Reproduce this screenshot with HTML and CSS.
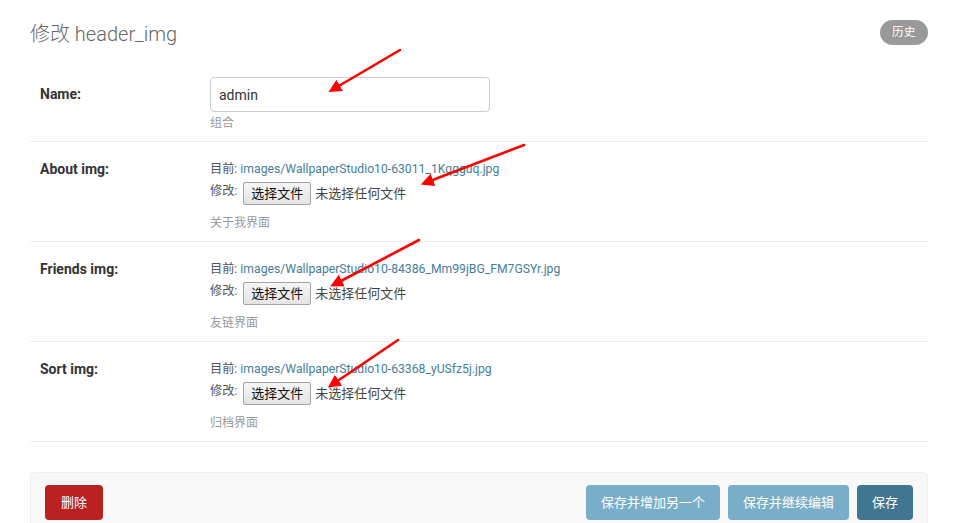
FILE: index.html
```html
<!DOCTYPE html>
<html lang="zh">
<head>
<meta charset="utf-8">
<title>修改 header_img</title>
<link rel="stylesheet" href="styles.css">
</head>
<body>
<div class="content">
  <div class="header">
    <h1 class="title">修改 header_img</h1>
    <a class="history" href="#">历史</a>
  </div>

  <div class="fieldset">
    <div class="form-row">
      <label class="label">Name:</label>
      <div class="field">
        <input class="text-input" type="text" value="admin">
        <div class="help">组合</div>
      </div>
    </div>

    <div class="form-row">
      <label class="label">About img:</label>
      <div class="field file-field">
        <div class="current">目前: <a class="link" href="#">images/WallpaperStudio10-63011_1Kqgguq.jpg</a></div>
        <div class="change">修改: <span class="file-btn">选择文件</span><span class="no-file">未选择任何文件</span></div>
        <div class="help help-file">关于我界面</div>
      </div>
    </div>

    <div class="form-row">
      <label class="label">Friends img:</label>
      <div class="field file-field">
        <div class="current">目前: <a class="link" href="#">images/WallpaperStudio10-84386_Mm99jBG_FM7GSYr.jpg</a></div>
        <div class="change">修改: <span class="file-btn">选择文件</span><span class="no-file">未选择任何文件</span></div>
        <div class="help help-file">友链界面</div>
      </div>
    </div>

    <div class="form-row">
      <label class="label">Sort img:</label>
      <div class="field file-field">
        <div class="current">目前: <a class="link" href="#">images/WallpaperStudio10-63368_yUSfz5j.jpg</a></div>
        <div class="change">修改: <span class="file-btn">选择文件</span><span class="no-file">未选择任何文件</span></div>
        <div class="help help-file">归档界面</div>
      </div>
    </div>
  </div>

  <div class="submit-row">
    <a class="btn btn-delete" href="#">删除</a>
    <div class="btn-group">
      <span class="btn btn-light">保存并增加另一个</span>
      <span class="btn btn-light">保存并继续编辑</span>
      <span class="btn btn-dark">保存</span>
    </div>
  </div>
</div>

<svg class="arrows" width="958" height="523" viewBox="0 0 958 523">
  <defs>
    <marker id="head" markerWidth="5" markerHeight="5" refX="1.2" refY="2.5" orient="auto" markerUnits="strokeWidth">
      <path d="M0,0 L5,2.5 L0,5 Z" fill="#f00"/>
    </marker>
  </defs>
  <g stroke="#f00" stroke-width="2.6" stroke-linecap="round">
    <line x1="400" y1="50" x2="337" y2="87" marker-end="url(#head)"/>
    <line x1="524" y1="145" x2="430" y2="181" marker-end="url(#head)"/>
    <line x1="419" y1="240" x2="339" y2="282" marker-end="url(#head)"/>
    <line x1="398" y1="340" x2="336" y2="382" marker-end="url(#head)"/>
  </g>
</svg>
</body>
</html>
```

FILE: styles.css
```css
* { box-sizing: border-box; }

html, body {
  margin: 0;
  padding: 0;
  background: #fff;
}

body {
  font-family: Roboto, "Noto Sans CJK SC", "Lucida Grande", Verdana, sans-serif;
  font-size: 14px;
  color: #333;
  width: 958px;
  height: 523px;
  overflow: hidden;
  position: relative;
}

.content {
  padding: 20px 30px 0;
}

.header {
  display: flex;
  justify-content: space-between;
  align-items: flex-start;
}

.title {
  margin: 2px 0 0;
  font-size: 20px;
  line-height: 24px;
  font-weight: 300;
  color: #666;
}

.history {
  display: block;
  height: 25px;
  padding: 0 12px;
  line-height: 25px;
  border-radius: 15px;
  background: #999;
  color: #fff;
  font-size: 11.5px;
  letter-spacing: 0.5px;
  text-decoration: none;
}

.fieldset {
  margin-top: 21px;
}

.form-row {
  display: flex;
  padding: 10px;
  border-bottom: 1px solid #eee;
}

.label {
  width: 170px;
  flex: none;
  padding: 9px 10px 0 0;
  line-height: 17px;
  font-size: 14px;
  font-weight: bold;
  color: #333;
}

.field {
  flex: 1;
  font-size: 12.2px;
  color: #666;
}

.text-input {
  display: block;
  width: 280px;
  height: 35px;
  margin: 0;
  padding: 1px 8px 0;
  border: 1px solid #ccc;
  border-radius: 4px;
  font-family: Roboto, "Noto Sans CJK SC", sans-serif;
  font-size: 14px;
  color: #333;
  background: #fff;
  outline: none;
}

.help {
  margin-top: 4px;
  font-size: 12px;
  line-height: 15px;
  color: #999;
}

.help-file {
  margin-top: 10px;
}

.current {
  margin-top: 8px;
  line-height: 18px;
  color: #555;
}

.link {
  color: #447e9b;
  text-decoration: none;
}

.change {
  display: flex;
  align-items: flex-start;
  height: 28px;
  padding-top: 4px;
  line-height: 18px;
  color: #555;
}

.file-btn {
  display: inline-block;
  height: 23px;
  margin-left: 6px;
  padding: 0 7px;
  line-height: 21px;
  font-size: 13px;
  color: #111;
  background: linear-gradient(#f6f6f6, #e4e4e4);
  border: 1px solid #a3a3a3;
  border-radius: 2px;
}

.no-file {
  margin-left: 4px;
  font-size: 13px;
  line-height: 23px;
  color: #444;
}

.submit-row {
  display: flex;
  justify-content: space-between;
  margin-top: 30px;
  padding: 12px 14px;
  background: #f8f8f8;
  border: 1px solid #eee;
  border-radius: 4px;
}

.btn-group {
  display: flex;
  gap: 8px;
}

.btn {
  display: block;
  height: 35px;
  padding: 0 15px;
  line-height: 35px;
  font-size: 13px;
  color: #fff;
  border-radius: 4px;
  text-decoration: none;
}

.btn-delete {
  padding: 0 16px;
  background: #ba2121;
}
.btn-light { background: #79aec8; }
.btn-dark { background: #417690; }

.arrows {
  position: absolute;
  left: 0;
  top: 0;
  pointer-events: none;
}
```
